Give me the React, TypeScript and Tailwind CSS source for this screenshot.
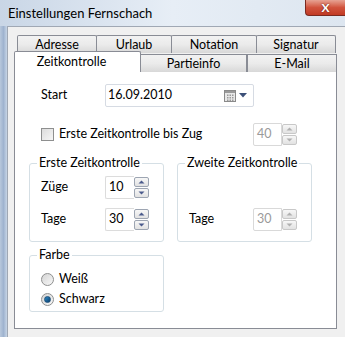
import React from "react"

const font = { fontFamily: 'Lato, "Open Sans", "Noto Sans", sans-serif' }

const Spin = ({ value, disabled }: { value: string; disabled?: boolean }) => (
  <div className="flex items-center h-[23px] w-[44px]">
    <div
      className={`flex items-center h-full w-[29px] border rounded-l-[2px] pl-[3px] ${
        disabled ? "border-[#d9d9d9] text-[#9a9a9a]" : "border-[#dcdcdc] border-r-0 text-black"
      }`}
    >
      {value}
    </div>
    <div className="flex flex-col justify-center gap-[1px] h-full">
      {[0, 1].map((i) => (
        <div
          key={i}
          className={`w-[15px] h-[10px] rounded-[2px] border flex items-center justify-center bg-gradient-to-b from-[#f7f7f7] to-[#e2e2e2] ${
            disabled ? "border-[#c8c8c8]" : "border-[#9da5b2]"
          }`}
        >
          <svg width="7" height="4" viewBox="0 0 7 4">
            <path
              d={i === 0 ? "M0.5 3.5 L3.5 0.5 L6.5 3.5 Z" : "M0.5 0.5 L3.5 3.5 L6.5 0.5 Z"}
              fill={disabled ? "#b0b0b0" : "#4a5a8c"}
            />
          </svg>
        </div>
      ))}
    </div>
  </div>
)

const Group = ({ title, className, children }: { title: string; className?: string; children?: React.ReactNode }) => (
  <div className={`relative border border-[#d5dfe5] rounded-[3px] ${className ?? ""}`}>
    <span className="absolute -top-[9px] left-[7px] bg-white px-[2px] leading-[16px]">{title}</span>
    {children}
  </div>
)

const Radio = ({ checked, label }: { checked?: boolean; label: string }) => (
  <div className="flex items-center gap-[5px] h-[16px]">
    <div className="w-[13px] h-[13px] rounded-full border border-[#8e8f8f] bg-gradient-to-br from-[#d4d4d4] to-[#f8f8f8] flex items-center justify-center">
      {checked && <div className="w-[7px] h-[7px] rounded-full bg-gradient-to-br from-[#2f8bc7] to-[#0b3f6e] border border-[#1c4f7a]" />}
    </div>
    <span>{label}</span>
  </div>
)

const tabBg = "bg-gradient-to-b from-[#f2f2f2] via-[#ebebeb] to-[#d8d8d8]"

const BackTab = ({ label, w }: { label: string; w: string }) => (
  <div className={`${w} h-[18px] border border-[#898c95] border-b-0 rounded-t-[2px] ${tabBg} flex justify-center leading-[18px] -mr-[1px]`}>
    {label}
  </div>
)

export default function App() {
  return (
    <div style={font} className="w-[345px] h-[337px] overflow-hidden text-[12.5px] text-black bg-gradient-to-r from-[#c9d6e6] via-[#e7eef6] to-[#dde6f0] flex flex-col">
      {/* title bar */}
      <div className="h-[26px] flex items-start relative shrink-0">
        <span className="pl-[8px] pt-[4px] text-[13px] leading-[18px]">Einstellungen Fernschach</span>
        <div className="absolute right-0 top-0 w-[40px] h-[16px] rounded-bl-[4px] border border-t-0 border-r-0 border-[#7a2a20] bg-gradient-to-b from-[#e6a293] via-[#d1533d] to-[#c13a24] flex items-center justify-center">
          <span className="text-white font-bold text-[12px] leading-none" style={{ textShadow: "0 0 2px #5a1a10" }}>
            X
          </span>
        </div>
      </div>

      <div className="flex flex-1">
        {/* left frame */}
        <div className="w-[7px] shrink-0 bg-gradient-to-r from-[#b8c8dc] via-[#9fb3cf] to-[#c7d5e6]" />
        <div className="flex-1 bg-[#f0f0f0] border-l border-t border-[#a0a8b4] pl-[6px] pt-[8px]">
          {/* tab control */}
          <div className="w-[323px]">
            <div className="flex pl-[3px] h-[18px]">
              <BackTab label="Adresse" w="w-[80px]" />
              <BackTab label="Urlaub" w="w-[76px]" />
              <BackTab label="Notation" w="w-[86px]" />
              <BackTab label="Signatur" w="w-[80px]" />
            </div>
            <div className="flex items-end h-[21px] -mt-[2px] relative">
              <div className="w-[127px] h-[21px] bg-white border border-[#898c95] border-b-0 rounded-t-[2px] flex justify-center leading-[20px] relative z-10 pr-[12px]">
                Zeitkontrolle
              </div>
              <div className={`w-[106px] h-[18px] border border-[#898c95] border-b-0 border-l-0 ${tabBg} flex justify-center leading-[18px]`}>
                Partieinfo
              </div>
              <div className={`w-[90px] h-[18px] border border-[#898c95] border-b-0 ${tabBg} flex justify-center leading-[18px]`}>
                E-Mail
              </div>
            </div>

            {/* panel */}
            <div className="h-[258px] bg-white border border-[#898c95] -mt-[1px] pl-[14px] pr-[12px] pt-[12px]">
              <div className="flex items-center pl-[12px]">
                <span className="w-[64px]">Start</span>
                <div className="w-[149px] h-[23px] border border-[#d6dbe3] rounded-[2px] flex items-center pl-[2px] pr-[6px]">
                  <span className="flex-1">16.09.2010</span>
                  <svg width="12" height="12" viewBox="0 0 12 12">
                    <rect x="0.5" y="0.5" width="11" height="11" fill="#e8e8e8" stroke="#8a8a8a" />
                    <rect x="1" y="1" width="10" height="2" fill="#9a9a9a" />
                    {[3, 5.5, 8].map((x) =>
                      [4.5, 7, 9.5].map((y) => <rect key={`${x}-${y}`} x={x} y={y} width="1.5" height="1.5" fill="#9a9a9a" />)
                    )}
                  </svg>
                  <svg width="8" height="5" viewBox="0 0 8 5" className="ml-[3px]">
                    <path d="M0 0 L8 0 L4 4.5 Z" fill="#3c5078" />
                  </svg>
                </div>
              </div>

              <div className="flex items-center pl-[12px] mt-[16px] h-[22px]">
                <div className="w-[13px] h-[13px] border border-[#8e8f8f] bg-gradient-to-br from-[#dcdcdc] to-[#f6f6f6]" />
                <span className="ml-[5px] w-[194px]">Erste Zeitkontrolle bis Zug</span>
                <Spin value="40" disabled />
              </div>

              <div className="flex gap-[13px] mt-[18px]">
                <Group title="Erste Zeitkontrolle" className="w-[135px] h-[79px] pl-[11px] pt-[12px]">
                  <div className="flex items-center">
                    <span className="w-[64px]">Züge</span>
                    <Spin value="10" />
                  </div>
                  <div className="flex items-center mt-[9px]">
                    <span className="w-[64px]">Tage</span>
                    <Spin value="30" />
                  </div>
                </Group>
                <Group title="Zweite Zeitkontrolle" className="w-[135px] h-[79px] pl-[11px] pt-[44px]">
                  <div className="flex items-center">
                    <span className="w-[64px]">Tage</span>
                    <Spin value="30" disabled />
                  </div>
                </Group>
              </div>

              <Group title="Farbe" className="w-[135px] h-[57px] mt-[13px] pl-[11px] pt-[15px]">
                <Radio label="Weiß" />
                <div className="mt-[4px]">
                  <Radio label="Schwarz" checked />
                </div>
              </Group>
            </div>
          </div>
        </div>
      </div>
    </div>
  )
}
